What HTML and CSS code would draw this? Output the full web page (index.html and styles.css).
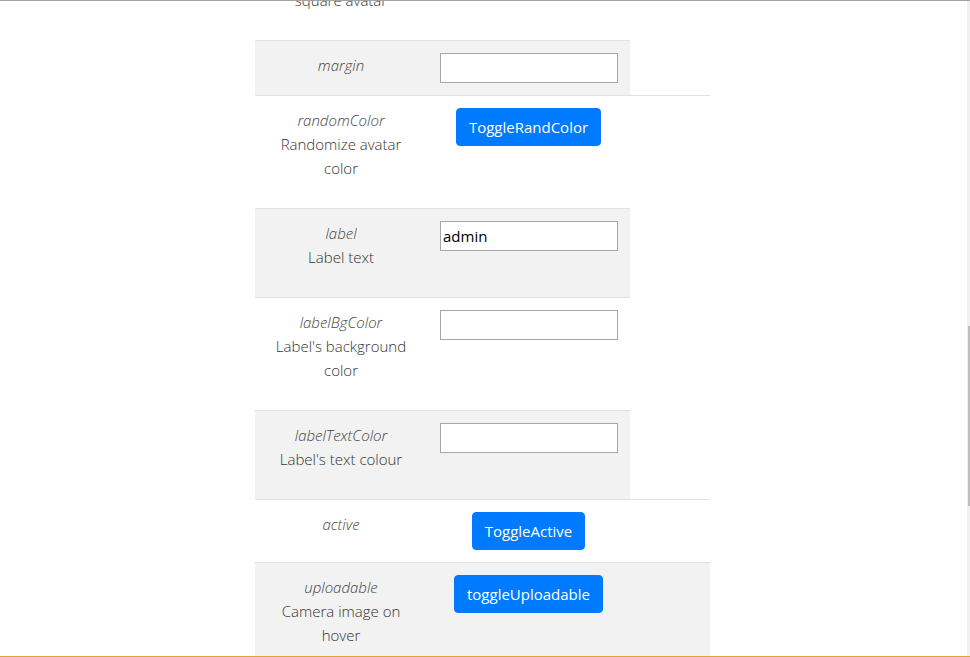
FILE: index.html
```html
<!DOCTYPE html>
<html lang="en">
<head>
<meta charset="utf-8">
<title>Avatar props</title>
<link rel="stylesheet" href="styles.css">
</head>
<body>
<div class="frame">
  <main class="viewport">
    <div class="props">
      <div class="row first">
        <div class="cell name"><p class="desc">square avatar</p></div>
        <div class="cell"></div>
      </div>
      <div class="row alt">
        <div class="cell name"><em class="prop">margin</em></div>
        <div class="cell value"><input class="field" type="text"></div>
      </div>
      <div class="row">
        <div class="cell name"><em class="prop">randomColor</em><p class="desc">Randomize avatar color</p></div>
        <div class="cell action"><button class="btn" type="button">ToggleRandColor</button></div>
        <div class="cell"></div>
      </div>
      <div class="row alt">
        <div class="cell name"><em class="prop">label</em><p class="desc">Label text</p></div>
        <div class="cell value"><input class="field" type="text" value="admin"></div>
      </div>
      <div class="row">
        <div class="cell name"><em class="prop">labelBgColor</em><p class="desc">Label's background color</p></div>
        <div class="cell value"><input class="field" type="text"></div>
      </div>
      <div class="row alt">
        <div class="cell name"><em class="prop">labelTextColor</em><p class="desc">Label's text colour</p></div>
        <div class="cell value"><input class="field" type="text"></div>
      </div>
      <div class="row">
        <div class="cell name"><em class="prop">active</em></div>
        <div class="cell action"><button class="btn" type="button">ToggleActive</button></div>
        <div class="cell"></div>
      </div>
      <div class="row alt">
        <div class="cell name"><em class="prop">uploadable</em><p class="desc">Camera image on hover</p></div>
        <div class="cell action"><button class="btn" type="button">toggleUploadable</button></div>
        <div class="cell"></div>
      </div>
    </div>
  </main>
  <div class="scrollbar"><div class="thumb"></div></div>
</div>
</body>
</html>
```

FILE: styles.css
```css
* { box-sizing: border-box; }

html, body {
  margin: 0;
  padding: 0;
  background: #fff;
}

body {
  font-family: "Open Sans", "Liberation Sans", sans-serif;
  font-size: 15px;
  line-height: 24px;
  color: #333;
}

.frame {
  height: 657px;
  display: flex;
  border-top: 1px solid #a3a3a3;
  border-bottom: 1px solid #e3a42b;
  overflow: hidden;
}

.viewport {
  flex: 1;
  overflow: hidden;
  padding-left: 255px;
}

.props {
  width: 455px;
  margin-top: -13px;
}

.row {
  display: grid;
  grid-template-columns: 172px 203px 80px;
}

.cell {
  border-top: 1px solid #dee2e6;
  padding: 12px;
}

.row.first .cell {
  border-top: 0;
  padding-top: 0;
}

.row.alt .cell {
  background: #f2f2f2;
}

.name {
  text-align: center;
  font-weight: 300;
}

.prop {
  display: block;
  font-style: italic;
  color: #444;
}

.desc {
  margin: 0 0 16px;
  color: #333;
}

.value {
  padding-left: 13px;
}

.field {
  display: block;
  width: 178px;
  height: 30px;
  margin: 0;
  padding: 1px 2px;
  border: 1px solid #a6a6a6;
  background: #fff;
  font-family: "Open Sans", "Liberation Sans", sans-serif;
  font-size: 15px;
  color: #000;
}

.action {
  text-align: center;
}

.btn {
  display: inline-block;
  height: 38px;
  padding: 6px 12px;
  border: 1px solid #007bff;
  border-radius: 4px;
  background: #007bff;
  color: #fff;
  font-family: "Open Sans", "Liberation Sans", sans-serif;
  font-size: 15px;
  line-height: 24px;
  font-weight: 400;
}

.scrollbar {
  width: 3px;
  background: #f0f0f0;
  padding-top: 325px;
  padding-left: 1px;
}

.thumb {
  height: 180px;
  background: #bdbdbd;
}
```
